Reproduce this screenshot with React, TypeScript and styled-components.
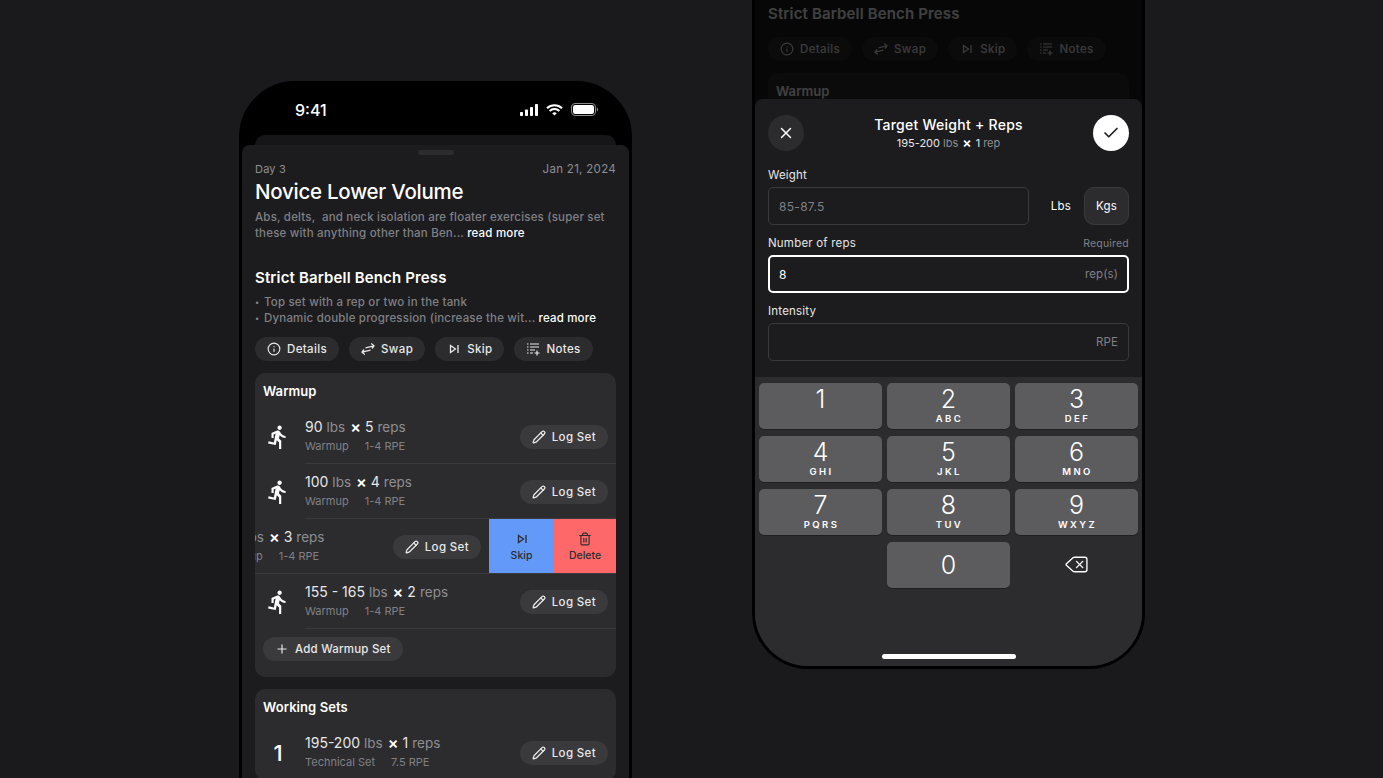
import React, { FunctionComponent } from 'react'
import styled, { createGlobalStyle } from 'styled-components'
import { Info, Pencil, Plus, X, Check, Delete, Trash2 } from 'lucide-react'
import { MdDirectionsRun } from 'react-icons/md'

const GlobalStyle = createGlobalStyle`
  html, body {
    margin: 0;
    padding: 0;
    background-color: #1a1a1c;
    font-family: Inter, "Liberation Sans", sans-serif;
    overflow: hidden;
  }
`

const Stage = styled.div`
  height: 778px;
  padding-left: 1px;
  overflow: hidden;
  display: flex;
  justify-content: center;
  align-items: flex-start;
  gap: 120px;
`

const Phone = styled.div<{ $top: number }>`
  position: relative;
  flex: none;
  box-sizing: border-box;
  width: 393px;
  height: 852px;
  margin-top: ${p => p.$top}px;
  border: 3px solid #000;
  border-radius: 56px;
  background-color: #000;
  overflow: hidden;
`

const StatusBar = styled.div`
  height: 51px;
  box-sizing: border-box;
  padding: 0 31px 0 53px;
  display: flex;
  align-items: center;
  justify-content: space-between;
  color: #fff;
  font-size: 16px;
  font-weight: 500;
`

const StatusIcons = styled.div`
  display: flex;
  align-items: center;
  gap: 8px;
`

const BackCard = styled.div`
  height: 10px;
  margin: 0 13px;
  border-radius: 10px 10px 0 0;
  background-color: #161618;
`

const Sheet = styled.div`
  height: 760px;
  box-sizing: border-box;
  padding: 5px 13px 0;
  border-radius: 8px 8px 0 0;
  background-color: #1c1c1e;
`

const Handle = styled.div`
  width: 36px;
  height: 5px;
  margin: 0 auto 7px;
  border-radius: 3px;
  background-color: #2c2c2e;
`

const MetaRow = styled.div`
  display: flex;
  justify-content: space-between;
  font-size: 11px;
  line-height: 14px;
  color: #8e8e93;
  letter-spacing: 0.2px;
`

const MetaDate = styled.span`
  font-size: 11.5px;
  letter-spacing: 0.3px;
`

const Title = styled.h1`
  margin: 2px 0 0;
  font-size: 20.5px;
  line-height: 27px;
  font-weight: 500;
  letter-spacing: -0.25px;
  color: #fff;
`

const Note = styled.p<{ $top: number }>`
  margin: ${p => p.$top}px 0 0;
  font-size: 11.5px;
  line-height: 16px;
  font-weight: 500;
  letter-spacing: 0.19px;
  color: #808085;
  white-space: nowrap;
`

const Bullet = styled.span`
  display: inline-block;
  width: 9px;
  font-size: 8px;
  vertical-align: 1px;
`

const ReadMore = styled.span`
  color: #fff;
`

const ExerciseTitle = styled.h2`
  margin: 27px 0 0;
  font-size: 15px;
  line-height: 20px;
  font-weight: 600;
  letter-spacing: 0.15px;
  color: #fff;
`

const ChipRow = styled.div<{ $top: number }>`
  display: flex;
  gap: 10px;
  margin-top: ${p => p.$top}px;
`

const Pill = styled.button<{ $bg?: string }>`
  height: 24px;
  box-sizing: border-box;
  padding: 0 12px;
  display: inline-flex;
  flex: none;
  align-items: center;
  gap: 6px;
  border: none;
  border-radius: 12px;
  background-color: ${p => p.$bg || '#2c2c2e'};
  color: #e8e8e8;
  font-family: inherit;
  font-size: 11.5px;
  font-weight: 500;
  letter-spacing: 0.36px;
`

const AddPill = styled(Pill)`
  letter-spacing: 0.2px;
`

const Card = styled.section`
  margin-top: 12px;
  padding-top: 9px;
  border-radius: 10px;
  background-color: #2c2c2e;
  overflow: hidden;
`

const CardTitle = styled.h3`
  margin: 0 0 9px 8px;
  font-size: 13px;
  line-height: 18px;
  font-weight: 600;
  letter-spacing: 0.08px;
  color: #fff;
`

const SetRow = styled.div`
  position: relative;
  height: 55px;
  display: flex;
  overflow: hidden;
`

const SetTrack = styled.div<{ $swiped?: boolean }>`
  flex: none;
  width: 100%;
  box-sizing: border-box;
  margin-left: ${p => (p.$swiped ? '-127px' : '0')};
  padding: 0 8px;
  display: flex;
  align-items: center;
`

const SetLead = styled.div`
  flex: none;
  width: 30px;
  margin-right: 12px;
  display: flex;
  justify-content: center;
  color: #fff;
  font-size: 22px;
  font-weight: 500;
`

const SetBody = styled.div<{ $swiped?: boolean }>`
  flex: 1;
  margin-top: -3px;
  margin-left: ${p => (p.$swiped ? '41px' : '0')};
  white-space: nowrap;
`

const SetMain = styled.div<{ $swiped?: boolean }>`
  margin-left: ${p => (p.$swiped ? '5px' : '0')};
  display: flex;
  align-items: center;
  font-size: 14px;
  line-height: 18px;
  color: #e6e6e6;
`

const Unit = styled.span`
  margin-left: 4px;
  font-size: 13.5px;
  color: #8e8e93;
`

const Times = styled.span`
  margin: 0 4px 0 5px;
  font-size: 16px;
  line-height: 16px;
  font-weight: 600;
  color: #fff;
`

const SetSub = styled.div`
  margin-top: 3px;
  display: flex;
  gap: 16px;
  font-size: 11px;
  line-height: 14px;
  color: #808085;
`

const Divider = styled.div<{ $full?: boolean }>`
  position: absolute;
  left: ${p => (p.$full ? '0' : '50px')};
  right: 0;
  bottom: 0;
  height: 1px;
  background-color: #3a3a3c;
`

const SwipeAction = styled.div<{ $bg: string; $w: number }>`
  flex: none;
  width: ${p => p.$w}px;
  display: flex;
  flex-direction: column;
  align-items: center;
  justify-content: center;
  gap: 3px;
  background-color: ${p => p.$bg};
  color: #2c2c2e;
  font-size: 10.5px;
  font-weight: 500;
`

const AddRow = styled.div`
  padding: 8px 8px 16px;
`

const Scrim = styled.div`
  position: absolute;
  inset: 0;
  background-color: rgba(0, 0, 0, 0.75);
`

const BottomSheet = styled.div`
  position: absolute;
  left: 0;
  right: 0;
  bottom: 0;
  height: 567px;
  display: flex;
  flex-direction: column;
  border-radius: 8px 8px 0 0;
  background-color: #1c1c1e;
  color: #fff;
`

const SheetHeader = styled.div`
  height: 52px;
  box-sizing: border-box;
  padding: 16px 13px 0;
  display: flex;
  align-items: flex-start;
  justify-content: space-between;
`

const RoundButton = styled.button<{ $light?: boolean }>`
  width: 36px;
  height: 36px;
  padding: 0;
  display: flex;
  align-items: center;
  justify-content: center;
  border: none;
  border-radius: 50%;
  background-color: ${p => (p.$light ? '#fff' : '#2c2c2e')};
  color: ${p => (p.$light ? '#1c1c1e' : '#fff')};
`

const HeaderText = styled.div`
  text-align: center;
`

const SheetTitle = styled.div`
  font-size: 14px;
  line-height: 20px;
  font-weight: 500;
  letter-spacing: 0.25px;
`

const SheetSub = styled.div`
  height: 14px;
  margin-top: 1px;
  display: flex;
  justify-content: center;
  align-items: center;
  font-size: 11px;
  line-height: 14px;
  color: #e6e6e6;
`

const SmallUnit = styled(Unit)`
  margin-left: 3px;
  font-size: 11px;
`

const SmallTimes = styled(Times)`
  margin: 0 4px;
  font-size: 14px;
`

const Form = styled.div`
  padding: 16px 13px 0;
  flex: 1;
`

const LabelRow = styled.div`
  height: 16px;
  margin-bottom: 4px;
  display: flex;
  align-items: center;
  justify-content: space-between;
  font-size: 11.5px;
  letter-spacing: 0.2px;
  color: #e6e6e6;
`

const Hint = styled.span`
  font-size: 10.5px;
  color: #808085;
`

const FieldRow = styled.div`
  display: flex;
  align-items: center;
  margin-bottom: 10px;
`

const Field = styled.div<{ $active?: boolean }>`
  flex: 1;
  height: 38px;
  box-sizing: border-box;
  padding: 0 ${p => (p.$active ? '9px' : '10px')};
  display: flex;
  align-items: center;
  justify-content: space-between;
  border: ${p => (p.$active ? '2px solid #fff' : '1px solid #3a3a3c')};
  border-radius: 5px;
  font-size: 12px;
  letter-spacing: 0.3px;
  color: #808085;
`

const FieldValue = styled.span`
  color: #fff;
`

const FieldSuffix = styled.span`
  margin-left: auto;
  font-size: 11.5px;
  letter-spacing: 0.1px;
`

const UnitLabel = styled.span`
  margin: 0 13px 0 22px;
  font-size: 11.5px;
  letter-spacing: 0.2px;
`

const UnitButton = styled.div`
  width: 45px;
  height: 38px;
  box-sizing: border-box;
  display: flex;
  align-items: center;
  justify-content: center;
  border: 1px solid #3a3a3c;
  border-radius: 10px;
  background-color: #2c2c2e;
  font-size: 11.5px;
  letter-spacing: 0.2px;
`

const Keypad = styled.div`
  height: 289px;
  box-sizing: border-box;
  padding: 6px 4px 0;
  display: grid;
  grid-template-columns: repeat(3, 123px);
  grid-auto-rows: 46px;
  justify-content: space-between;
  row-gap: 7px;
  background-color: #2c2c2e;
`

const Key = styled.div`
  display: flex;
  flex-direction: column;
  align-items: center;
  border-radius: 5px;
  background-color: #5c5c5f;
  box-shadow: 0 1px 0 #1f1f21;
`

const KeyDigit = styled.div<{ $solo?: boolean }>`
  margin-top: ${p => (p.$solo ? '10px' : '3px')};
  font-size: 25px;
  line-height: 26px;
  font-weight: 300;
  color: #fff;
`

const KeyLetters = styled.div`
  margin-top: 1px;
  padding-left: 2px;
  font-size: 9.5px;
  line-height: 12px;
  font-weight: 600;
  letter-spacing: 2.4px;
  color: #fff;
`

const KeyIcon = styled.div`
  padding-bottom: 1px;
  display: flex;
  align-items: center;
  justify-content: center;
  color: #fff;
`

const HomeBar = styled.div`
  position: absolute;
  left: 127px;
  bottom: 7px;
  width: 134px;
  height: 5px;
  border-radius: 3px;
  background-color: #fff;
`

const SignalIcon = () => (
  <svg width="18" height="12" viewBox="0 0 18 12" fill="#fff">
    <rect x="0" y="8" width="3" height="4" rx="0.8" />
    <rect x="5" y="5.5" width="3" height="6.5" rx="0.8" />
    <rect x="10" y="3" width="3" height="9" rx="0.8" />
    <rect x="15" y="0" width="3" height="12" rx="0.8" />
  </svg>
)

const WifiIcon = () => (
  <svg width="17" height="12" viewBox="0 0 17 12" fill="none" stroke="#fff" strokeWidth="2">
    <path d="M1 4.2a11 11 0 0 1 15 0" />
    <path d="M3.6 7a7.2 7.2 0 0 1 9.8 0" />
    <path d="M8.5 11.4 6.2 9.2a3.4 3.4 0 0 1 4.6 0z" fill="#fff" stroke="none" />
  </svg>
)

const BatteryIcon = () => (
  <svg width="27" height="13" viewBox="0 0 27 13">
    <rect x="0.5" y="0.5" width="24" height="12" rx="3.5" fill="none" stroke="#8a8a8a" />
    <rect x="2" y="2" width="21" height="9" rx="2.2" fill="#fff" />
    <path d="M25.8 4.5v4c.7-.3 1.2-1 1.2-2s-.5-1.700-1.200-2z" fill="#8a8a8a" />
  </svg>
)

const SwapIcon = () => (
  <svg width="14" height="14" viewBox="0 0 14 14" fill="none" stroke="currentColor" strokeWidth="1.3">
    <path d="M4.500 5.800 13 3.800M10.200 1.500 13 3.800l-2 2.700" />
    <path d="M9.500 8.200 1 10.200M3.800 12.500 1 10.200l2-2.700" />
  </svg>
)

const SkipIcon = () => (
  <svg width="14" height="14" viewBox="0 0 14 14" fill="none" stroke="currentColor" strokeWidth="1.3">
    <path d="M3.500 3.500v7L8.500 7z" />
    <path d="M11 3v8" />
  </svg>
)

const NotesIcon = () => (
  <svg width="14" height="14" viewBox="0 0 14 14" fill="none" stroke="currentColor" strokeWidth="1.200">
    <path d="M1 2h1.500M4 2h9M1 5h1.500M4 5h9M1 8h1.500M4 8h5M1 11h1.500M4 11h3" />
    <path d="M11 8.500v5M8.500 11h5" />
  </svg>
)

type WarmupSet = { weight: string; reps: string }

const warmupSets: WarmupSet[] = [
  { weight: '90', reps: '5' },
  { weight: '100', reps: '4' },
  { weight: '95', reps: '3' },
  { weight: '155 - 165', reps: '2' },
]

const SetContent: FunctionComponent<{ weight: string; reps: string; sub: string; rpe: string; lead: React.ReactNode; swiped?: boolean }> = ({ weight, reps, sub, rpe, lead, swiped }) => (
  <SetTrack $swiped={swiped}>
    <SetLead>{lead}</SetLead>
    <SetBody $swiped={swiped}>
      <SetMain $swiped={swiped}>
        {weight}
        <Unit>lbs</Unit>
        <Times>×</Times>
        {reps}
        <Unit>reps</Unit>
      </SetMain>
      <SetSub>
        <span>{sub}</span>
        <span>{rpe}</span>
      </SetSub>
    </SetBody>
    <Pill $bg="#3a3a3c">
      <Pencil size={14} strokeWidth={2.2} />
      Log Set
    </Pill>
  </SetTrack>
)

const WorkoutScreen: FunctionComponent<{ collapsed?: boolean }> = ({ collapsed }) => (
  <>
    <StatusBar>
      <span>9:41</span>
      <StatusIcons>
        <SignalIcon />
        <WifiIcon />
        <BatteryIcon />
      </StatusIcons>
    </StatusBar>
    <BackCard />
    <Sheet>
      <Handle />
      <MetaRow>
        <span>Day 3</span>
        <MetaDate>Jan 21, 2024</MetaDate>
      </MetaRow>
      <Title>Novice Lower Volume</Title>
      <Note $top={4}>
        Abs, delts,&nbsp; and neck isolation are floater exercises (super set
        <br />
        these with anything other than Ben... <ReadMore>read more</ReadMore>
      </Note>
      <ExerciseTitle>Strict Barbell Bench Press</ExerciseTitle>
      {!collapsed && (
        <Note $top={6}>
          <Bullet>•</Bullet>Top set with a rep or two in the tank
          <br />
          <Bullet>•</Bullet>Dynamic double progression (increase the wit... <ReadMore>read more</ReadMore>
        </Note>
      )}
      <ChipRow $top={collapsed ? 13 : 11}>
        <Pill><Info size={14} />Details</Pill>
        <Pill><SwapIcon />Swap</Pill>
        <Pill><SkipIcon />Skip</Pill>
        <Pill><NotesIcon />Notes</Pill>
      </ChipRow>
      <Card>
        <CardTitle>Warmup</CardTitle>
        {warmupSets.map((set, i) => (
          <SetRow key={set.weight}>
            <SetContent
              weight={set.weight}
              reps={set.reps}
              sub="Warmup"
              rpe="1-4 RPE"
              lead={<MdDirectionsRun size={26} />}
              swiped={i === 2}
            />
            {i === 2 && (
              <>
                <SwipeAction $bg="#6399f8" $w={65}><SkipIcon />Skip</SwipeAction>
                <SwipeAction $bg="#fe6868" $w={62}><Trash2 size={14} />Delete</SwipeAction>
              </>
            )}
            <Divider $full={i === 2} />
          </SetRow>
        ))}
        <AddRow>
          <AddPill $bg="#3a3a3c"><Plus size={14} />Add Warmup Set</AddPill>
        </AddRow>
      </Card>
      <Card>
        <CardTitle>Working Sets</CardTitle>
        <SetRow>
          <SetContent weight="195-200" reps="1" sub="Technical Set" rpe="7.5 RPE" lead="1" />
        </SetRow>
      </Card>
    </Sheet>
  </>
)

const keys: { digit: string; letters?: string }[] = [
  { digit: '1' },
  { digit: '2', letters: 'ABC' },
  { digit: '3', letters: 'DEF' },
  { digit: '4', letters: 'GHI' },
  { digit: '5', letters: 'JKL' },
  { digit: '6', letters: 'MNO' },
  { digit: '7', letters: 'PQRS' },
  { digit: '8', letters: 'TUV' },
  { digit: '9', letters: 'WXYZ' },
]

const TargetSheet: FunctionComponent = () => (
  <BottomSheet>
    <SheetHeader>
      <RoundButton><X size={18} /></RoundButton>
      <HeaderText>
        <SheetTitle>Target Weight + Reps</SheetTitle>
        <SheetSub>
          195-200
          <SmallUnit>lbs</SmallUnit>
          <SmallTimes>×</SmallTimes>
          1
          <SmallUnit>rep</SmallUnit>
        </SheetSub>
      </HeaderText>
      <RoundButton $light><Check size={18} strokeWidth={2.2} /></RoundButton>
    </SheetHeader>
    <Form>
      <LabelRow>Weight</LabelRow>
      <FieldRow>
        <Field>85-87.5</Field>
        <UnitLabel>Lbs</UnitLabel>
        <UnitButton>Kgs</UnitButton>
      </FieldRow>
      <LabelRow>
        Number of reps
        <Hint>Required</Hint>
      </LabelRow>
      <FieldRow>
        <Field $active>
          <FieldValue>8</FieldValue>
          <FieldSuffix>rep(s)</FieldSuffix>
        </Field>
      </FieldRow>
      <LabelRow>Intensity</LabelRow>
      <FieldRow>
        <Field>
          <FieldSuffix>RPE</FieldSuffix>
        </Field>
      </FieldRow>
    </Form>
    <Keypad>
      {keys.map(key => (
        <Key key={key.digit}>
          <KeyDigit>{key.digit}</KeyDigit>
          {key.letters && <KeyLetters>{key.letters}</KeyLetters>}
        </Key>
      ))}
      <span />
      <Key>
        <KeyDigit $solo>0</KeyDigit>
      </Key>
      <KeyIcon><Delete size={25} strokeWidth={1.3} /></KeyIcon>
    </Keypad>
    <HomeBar />
  </BottomSheet>
)

const App: FunctionComponent = () => (
  <>
    <GlobalStyle />
    <Stage>
      <Phone $top={81}>
        <WorkoutScreen />
      </Phone>
      <Phone $top={-183}>
        <WorkoutScreen collapsed />
        <Scrim />
        <TargetSheet />
      </Phone>
    </Stage>
  </>
)

export default App
